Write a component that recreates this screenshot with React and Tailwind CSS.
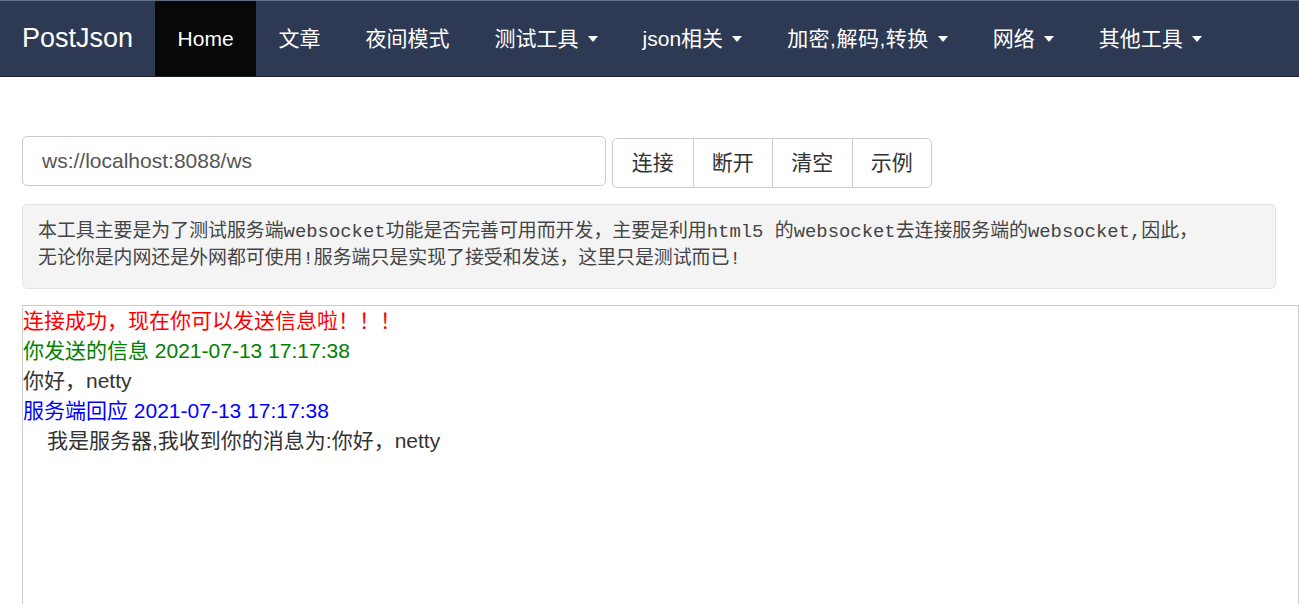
import React from "react";

const sans = { fontFamily: '"Liberation Sans", "Noto Sans CJK SC", sans-serif' };

function Caret() {
  return (
    <span className="inline-block ml-[9px] w-0 h-0 border-l-[5.5px] border-r-[5.5px] border-t-[6px] border-l-transparent border-r-transparent border-t-white align-middle"></span>
  );
}

function NavBar() {
  const items = [
    { label: "Home", active: true },
    { label: "文章" },
    { label: "夜间模式" },
    { label: "测试工具", drop: true },
    { label: "json相关", drop: true },
    { label: "加密,解码,转换", drop: true, wide: true },
    { label: "网络", drop: true },
    { label: "其他工具", drop: true },
  ];
  return (
    <div className="h-[77px] bg-[#2e3a53] border-t border-t-[#5f6e82] border-b border-b-[#1b1f27] flex items-stretch text-white">
      <div className="flex items-center pl-[22px] pr-[22px] text-[27px]">PostJson</div>
      {items.map((it) => (
        <div
          key={it.label}
          className={`flex items-center px-[22.5px] text-[21px] ${it.active ? "bg-[#080808]" : ""}`}
        >
          <span className={it.wide ? "tracking-[0.5px]" : ""}>{it.label}</span>
          {it.drop && <Caret />}
        </div>
      ))}
    </div>
  );
}

export default function App() {
  return (
    <div className="bg-white min-h-screen overflow-hidden text-[#333]" style={sans}>
      <NavBar />
      <div className="pl-[22px] pr-[23px] pt-[59px]">
        <div className="flex items-start gap-[6px]">
          <input
            className="w-[584px] h-[50px] border border-[#ccc] rounded-[5px] px-[19px] text-[21px] text-[#555] outline-none"
            defaultValue="ws://localhost:8088/ws"
            readOnly
          />
          <div className="mt-[2px] flex h-[50px] border border-[#ccc] rounded-[5px] bg-white">
            {["连接", "断开", "清空", "示例"].map((b, i) => (
              <div
                key={b}
                className={`w-[79.5px] flex items-center justify-center text-[21px] text-[#333] ${i > 0 ? "border-l border-[#ccc]" : ""}`}
              >
                {b}
              </div>
            ))}
          </div>
        </div>
        <div
          className="mt-[16px] bg-[#f4f4f4] border border-[#e3e3e3] rounded-[5px] px-[15px] pt-[14px] pb-[15px] text-[18.9px] leading-[27px] text-[#444] whitespace-nowrap"
          style={{ fontFamily: '"Liberation Mono", "Noto Sans CJK SC", monospace' }}
        >
          本工具主要是为了测试服务端websocket功能是否完善可用而开发，主要是利用html5 的websocket去连接服务端的websocket,因此，
          <br />
          无论你是内网还是外网都可使用!服务端只是实现了接受和发送，这里只是测试而已!
        </div>
      </div>
      <div className="ml-[22px] mt-[16px] h-[320px] border border-[#ccc] text-[21px] leading-[30px]">
        <div className="text-[#ff0000]">连接成功，现在你可以发送信息啦！！！</div>
        <div className="text-[#008000]">你发送的信息 2021-07-13 17:17:38</div>
        <div className="text-[#333]">你好，netty</div>
        <div className="text-[#0000ff]">服务端回应 2021-07-13 17:17:38</div>
        <div className="text-[#333] pl-6">我是服务器,我收到你的消息为:你好，netty</div>
      </div>
    </div>
  );
}
